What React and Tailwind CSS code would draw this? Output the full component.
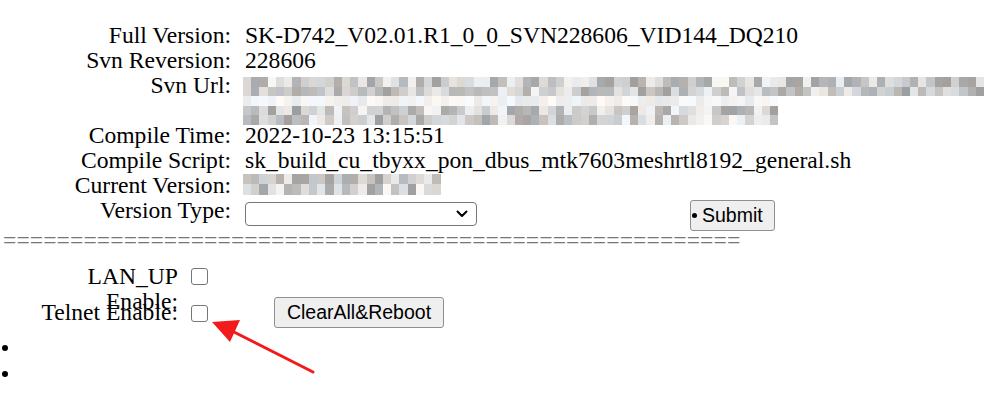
import React from 'react';

const serif = { fontFamily: '"Liberation Serif", "Times New Roman", serif' };

// deterministic noise for the pixelated (redacted) values
const rnd = (i) => {
  const x = Math.sin(i * 12.9898 + 78.233) * 43758.5453;
  return x - Math.floor(x);
};

function Pixelated({ rows, seed = 1, cell = 8.24 }) {
  return (
    <div className="flex flex-col">
      {rows.map((row, r) => (
        <div key={r} className="flex" style={{ height: row.h }}>
          {Array.from({ length: row.cols }).map((_, c) => {
            const n = rnd(seed * 1000 + r * 131 + c);
            const base = row.light ? 232 + n * 20 : 158 + n * 90;
            const v = Math.min(250, Math.round(base));
            const tint = Math.round((rnd(seed * 77 + r * 13 + c * 7) - 0.5) * 10);
            return (
              <div
                key={c}
                className="shrink-0"
                style={{
                  width: cell,
                  background: `rgb(${v + tint}, ${v}, ${v - tint})`,
                }}
              />
            );
          })}
        </div>
      ))}
    </div>
  );
}

function Checkbox() {
  return <div className="w-[17px] h-[17px] border border-[#767676] rounded-[3px] bg-white shrink-0" />;
}

const rowsInfo = [
  { label: 'Full Version:', value: 'SK-D742_V02.01.R1_0_0_SVN228606_VID144_DQ210' },
  { label: 'Svn Reversion:', value: '228606' },
];

export default function App() {
  return (
    <div className="relative w-[994px] h-[408px] bg-white text-black overflow-hidden" style={serif}>
      <div className="pt-[23px] text-[23.6px] leading-[25px]">
        {/* version info table */}
        <div className="grid grid-cols-[231px_1fr] gap-x-[14px]">
          {rowsInfo.map((r) => (
            <React.Fragment key={r.label}>
              <div className="text-right whitespace-nowrap">{r.label}</div>
              <div className="whitespace-nowrap">{r.value}</div>
            </React.Fragment>
          ))}

          <div className="text-right">Svn Url:</div>
          <div className="h-[50px] pt-[4px] -ml-[2px]">
            <Pixelated
              seed={3}
              rows={[
                { cols: 90, h: 10 },
                { cols: 90, h: 9 },
                { cols: 65, h: 10, light: true },
                { cols: 65, h: 9 },
                { cols: 65, h: 10 },
              ]}
            />
          </div>

          <div className="text-right">Compile Time:</div>
          <div>2022-10-23 13:15:51</div>

          <div className="text-right">Compile Script:</div>
          <div className="whitespace-nowrap">sk_build_cu_tbyxx_pon_dbus_mtk7603meshrtl8192_general.sh</div>

          <div className="text-right whitespace-nowrap">Current Version:</div>
          <div className="h-[25px] pt-[1px] -ml-[2px]">
            <Pixelated seed={7} rows={[{ cols: 24, h: 10 }, { cols: 24, h: 11 }]} />
          </div>

          <div className="text-right whitespace-nowrap">Version Type:</div>
          <div className="flex items-start h-[33px]">
            <div className="mt-[4px] w-[232px] h-[24px] border border-[#767676] rounded-[4px] bg-white flex items-center justify-end pr-[8px]">
              <svg width="12" height="8" viewBox="0 0 12 8" fill="none">
                <path d="M1.5 1.5 L6 6 L10.5 1.5" stroke="#000" strokeWidth="2" strokeLinecap="round" strokeLinejoin="round" />
              </svg>
            </div>
            <div
              className="ml-[213px] mt-[2px] h-[31px] w-[85px] bg-[#efefef] border border-[#8f8f8f] rounded-[3px] flex items-center text-[19.5px] leading-none relative"
              style={{ fontFamily: '"Liberation Sans", Arial, sans-serif' }}
            >
              <span className="w-[5px] h-[5px] rounded-full bg-black ml-[1px]" />
              <span className="ml-[5px]">Submit</span>
            </div>
          </div>
        </div>

        {/* separator */}
        <div className="-mt-[3px] ml-[3px] h-[25px] text-[#777] whitespace-nowrap tracking-[0.1px]">
          {'='.repeat(55)}
        </div>

        {/* flags */}
        <div className="mt-[11px] flex flex-col">
          <div className="flex items-center h-[25px]">
            <div className="w-[178px] h-[25px] pl-[36px] text-right">LAN_UP Enable:</div>
            <div className="ml-[13px]">
              <Checkbox />
            </div>
          </div>
          <div className="flex items-center h-[31px] mt-[8px]">
            <div className="w-[178px] text-right whitespace-nowrap">Telnet Enable:</div>
            <div className="ml-[13px] mt-[1px]">
              <Checkbox />
            </div>
            <div
              className="ml-[66px] h-[31px] w-[170px] bg-[#efefef] border border-[#8f8f8f] rounded-[3px] flex items-center justify-center text-[19.5px] leading-none"
              style={{ fontFamily: '"Liberation Sans", Arial, sans-serif' }}
            >
              ClearAll&amp;Reboot
            </div>
          </div>
        </div>

        {/* empty list */}
        <div className="mt-[7px] flex flex-col">
          <div className="h-[26px] flex items-center pl-[2px]">
            <span className="w-[6px] h-[6px] rounded-full bg-black" />
          </div>
          <div className="h-[26px] flex items-center pl-[2px]">
            <span className="w-[6px] h-[6px] rounded-full bg-black" />
          </div>
        </div>
      </div>

      {/* annotation arrow */}
      <svg className="absolute left-0 top-0 pointer-events-none" width="994" height="408">
        <line x1="313" y1="372" x2="232" y2="331" stroke="#f21a1a" strokeWidth="3" strokeLinecap="round" />
        <polygon points="212,322 240,320 230,342" fill="#f21a1a" />
      </svg>
    </div>
  );
}
